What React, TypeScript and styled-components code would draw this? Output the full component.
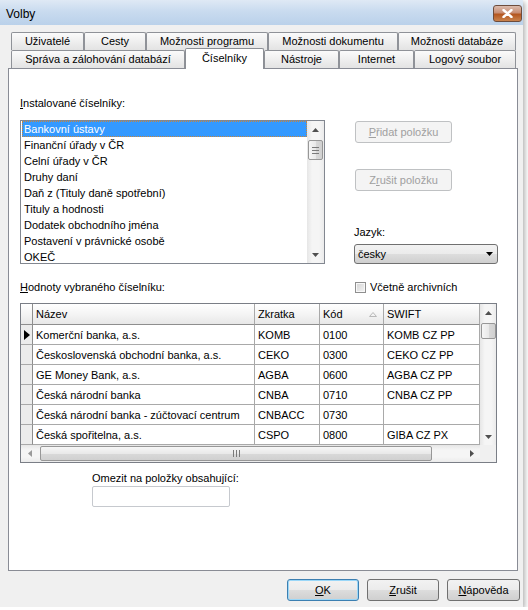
import React from 'react';
import styled, { createGlobalStyle, css } from 'styled-components';

const GlobalStyle = createGlobalStyle`
  html, body {
    margin: 0;
    padding: 0;
    background: #ffffff;
  }
  body {
    font-family: "Liberation Sans", Arial, sans-serif;
    font-size: 11px;
    color: #000;
  }
`;

const Window = styled.div`
  width: 523px;
  height: 607px;
  background: #f0f0f0;
  box-shadow: 2px 2px 5px rgba(0, 0, 0, 0.3);
  display: flex;
  flex-direction: column;
`;

const TitleBar = styled.div`
  height: 25px;
  flex-shrink: 0;
  display: flex;
  align-items: flex-start;
  justify-content: space-between;
  padding: 0 1px 0 6px;
  background: linear-gradient(#dfe9f5, #c9dbef 45%, #bad1ea);
`;

const Title = styled.span`
  font-size: 12px;
  line-height: 28px;
`;

const CloseButton = styled.div`
  width: 29px;
  height: 17px;
  margin-top: 5px;
  box-sizing: border-box;
  border: 1px solid #6d4c3c;
  border-radius: 3px;
  background: linear-gradient(#dcbcae, #c88e74 45%, #b4561f 55%, #c9834e);
  display: flex;
  align-items: center;
  justify-content: center;
`;

const Body = styled.div`
  flex: 1;
  display: flex;
  flex-direction: column;
  padding: 7px 5px 0 8px;
`;

const TabStrip = styled.div`
  padding: 0 2px 0 3px;
  display: flex;
  flex-direction: column;
`;

const TabRow = styled.div`
  display: flex;
  height: 18px;
  align-items: flex-start;
`;

const Tab = styled.div<{ $w: number; $active?: boolean }>`
  width: ${p => p.$w}px;
  height: 18px;
  box-sizing: border-box;
  border: 1px solid #8f9298;
  border-bottom: none;
  border-radius: 2px 2px 0 0;
  background: linear-gradient(#fbfbfb, #f0f0f0 45%, #e3e3e3);
  text-align: center;
  line-height: 17px;
  white-space: nowrap;
  ${p =>
    p.$active &&
    css`
      position: relative;
      z-index: 2;
      height: 21px;
      margin-top: -2px;
      background: #ffffff;
      border-color: #8c8f95;
      line-height: 19px;
    `}
`;

const Panel = styled.div`
  height: 503px;
  box-sizing: border-box;
  border: 1px solid #898c95;
  background: #ffffff;
  padding: 27px 11px 0 11px;
  display: flex;
  flex-direction: column;
`;

const Label = styled.div`
  line-height: 14px;
  height: 14px;
  white-space: nowrap;
`;

const Key = styled.span`
  text-decoration: underline;
`;

const TopSection = styled.div`
  display: flex;
`;

const LeftCol = styled.div`
  width: 305px;
  display: flex;
  flex-direction: column;
  gap: 10px;
`;

const RightCol = styled.div`
  width: 144px;
  margin-left: 29px;
  display: flex;
  flex-direction: column;
`;

const ListBox = styled.div`
  height: 144px;
  box-sizing: border-box;
  border: 1px solid #828790;
  display: flex;
  overflow: hidden;
`;

const ListItems = styled.div`
  flex: 1;
  overflow: hidden;
`;

const ListItem = styled.div<{ $selected?: boolean }>`
  height: 16px;
  box-sizing: border-box;
  line-height: 14px;
  padding: 0 1px;
  margin-left: 1px;
  border: 1px solid transparent;
  white-space: nowrap;
  ${p =>
    p.$selected &&
    css`
      background: #3399ff;
      color: #ffffff;
      border: 1px dotted #c8863c;
    `}
`;

const VScroll = styled.div<{ $w: number }>`
  width: ${p => p.$w}px;
  flex-shrink: 0;
  display: flex;
  flex-direction: column;
  background: linear-gradient(to right, #e6e6e6, #f5f5f5 30%, #f5f5f5 70%, #ebebeb);
`;

const HScroll = styled.div`
  height: 17px;
  flex: 1;
  display: flex;
  align-items: center;
  background: linear-gradient(#e6e6e6, #f5f5f5 30%, #f5f5f5 70%, #ebebeb);
`;

const ArrowBox = styled.div<{ $size: number }>`
  width: ${p => p.$size}px;
  height: ${p => p.$size}px;
  flex-shrink: 0;
  display: flex;
  align-items: center;
  justify-content: center;
`;

const Thumb = styled.div<{ $len: number; $gap: number; $horizontal?: boolean }>`
  box-sizing: border-box;
  border: 1px solid #979797;
  border-radius: 2px;
  display: flex;
  align-items: center;
  justify-content: center;
  ${p =>
    p.$horizontal
      ? css`
          width: ${p.$len}px;
          height: 15px;
          margin-left: ${p.$gap}px;
          background: linear-gradient(#f6f6f6, #e9e9e9 50%, #d9d9d9 51%, #d0d0d0);
        `
      : css`
          height: ${p.$len}px;
          width: 15px;
          margin: ${p.$gap}px 0 0 1px;
          background: linear-gradient(to right, #f6f6f6, #e9e9e9 50%, #d9d9d9 51%, #d0d0d0);
        `}
`;

const Spacer = styled.div`
  flex: 1;
`;

const ActionButton = styled.div<{ $disabled?: boolean; $primary?: boolean; $w: number }>`
  width: ${p => p.$w}px;
  height: 22px;
  box-sizing: border-box;
  border: 1px solid #707070;
  border-radius: 3px;
  background: linear-gradient(#f2f2f2, #ebebeb 50%, #dddddd 51%, #cfcfcf);
  display: flex;
  align-items: center;
  justify-content: center;
  white-space: nowrap;
  ${p =>
    p.$disabled &&
    css`
      border-color: #bfc1c3;
      background: #f4f4f4;
      color: #a0a0a0;
    `}
  ${p =>
    p.$primary &&
    css`
      border-color: #3c7fb1;
      box-shadow: inset 0 0 0 1px #9ad7f8;
    `}
`;

const SideButton = styled(ActionButton)<{ $top: number }>`
  margin: ${p => p.$top}px 0 0 1px;
`;

const Combo = styled.div`
  margin-top: 5px;
  height: 20px;
  box-sizing: border-box;
  border: 1px solid #707070;
  border-radius: 3px;
  background: linear-gradient(#f2f2f2, #ebebeb 50%, #dddddd 51%, #cfcfcf);
  display: flex;
  align-items: center;
  justify-content: space-between;
  padding: 0 4px 0 3px;
`;

const ComboLabel = styled(Label)`
  margin-top: 34px;
`;

const MidRow = styled.div`
  margin-top: 16px;
  display: grid;
  grid-template-columns: 335px 1fr;
  align-items: center;
`;

const CheckGroup = styled.div`
  display: flex;
  align-items: center;
  gap: 4px;
  height: 14px;
`;

const CheckBox = styled.div`
  width: 11px;
  height: 11px;
  box-sizing: border-box;
  border: 1px solid #8f8f8f;
  background: linear-gradient(135deg, #d4d4d4, #f4f4f4);
  box-shadow: inset 0 0 0 1px #f8f8f8;
`;

const DataGrid = styled.div`
  margin-top: 9px;
  width: 477px;
  height: 160px;
  box-sizing: border-box;
  border: 1px solid #7a7e86;
  display: flex;
  flex-direction: column;
`;

const GridMain = styled.div`
  display: flex;
  height: 141px;
`;

const GridBody = styled.div`
  width: 459px;
  display: flex;
  flex-direction: column;
`;

const GridRow = styled.div<{ $header?: boolean }>`
  display: grid;
  grid-template-columns: 12px 222px 65px 64px 96px;
  height: ${p => (p.$header ? 21 : 20)}px;
  ${p =>
    p.$header &&
    css`
      background: linear-gradient(#ffffff, #f4f4f4 50%, #e6e6e6);
    `}
`;

const Cell = styled.div<{ $header?: boolean }>`
  box-sizing: border-box;
  border-right: 1px solid #a9a9a9;
  border-bottom: 1px solid ${p => (p.$header ? '#8e8e8e' : '#a9a9a9')};
  padding: 0 3px;
  display: flex;
  align-items: center;
  justify-content: space-between;
  white-space: nowrap;
  overflow: hidden;
`;

const RowHead = styled.div<{ $header?: boolean }>`
  box-sizing: border-box;
  border-right: 1px solid #8e8e8e;
  border-bottom: 1px solid ${p => (p.$header ? '#8e8e8e' : '#a9a9a9')};
  background: ${p => (p.$header ? 'transparent' : '#ececec')};
  display: flex;
  align-items: center;
  justify-content: center;
`;

const SortMark = styled.svg`
  margin-right: 3px;
`;

const GridFoot = styled.div`
  display: flex;
  height: 17px;
`;

const Corner = styled.div`
  width: 16px;
  background: #f0f0f0;
`;

const FilterBlock = styled.div`
  margin-top: 8px;
  padding-left: 72px;
  display: flex;
  flex-direction: column;
  gap: 1px;
`;

const TextInput = styled.div`
  width: 138px;
  height: 21px;
  box-sizing: border-box;
  border: 1px solid #c6c9ce;
  border-radius: 2px;
  background: #ffffff;
`;

const Footer = styled.div`
  display: flex;
  justify-content: flex-end;
  gap: 8px;
  padding-top: 8px;
  margin-right: -2px;
`;

const Tri = ({ dir, color = '#505050' }: { dir: 'up' | 'down' | 'left' | 'right'; color?: string }) => {
  const pts = {
    up: '0,4 7,4 3.5,0',
    down: '0,0 7,0 3.5,4',
    left: '4,0 4,7 0,3.5',
    right: '0,0 0,7 4,3.5',
  }[dir];
  const vertical = dir === 'up' || dir === 'down';
  return (
    <svg width={vertical ? 7 : 4} height={vertical ? 4 : 7} viewBox={vertical ? '0 0 7 4' : '0 0 4 7'}>
      <polygon points={pts} fill={color} />
    </svg>
  );
};

const RowPointer = () => (
  <svg width="6" height="10" viewBox="0 0 6 10">
    <polygon points="0,0 0,10 6,5" fill="#000000" />
  </svg>
);

const Grip = ({ horizontal }: { horizontal?: boolean }) =>
  horizontal ? (
    <svg width="7" height="7" viewBox="0 0 7 7">
      <path d="M0.5 0v7M3.5 0v7M6.5 0v7" stroke="#7a7a7a" strokeWidth="1" />
    </svg>
  ) : (
    <svg width="7" height="7" viewBox="0 0 7 7">
      <path d="M0 0.5h7M0 3.5h7M0 6.5h7" stroke="#7a7a7a" strokeWidth="1" />
    </svg>
  );

const tabsBack: [string, number][] = [
  ['Uživatelé', 73],
  ['Cesty', 62],
  ['Možnosti programu', 122],
  ['Možnosti dokumentu', 130],
  ['Možnosti databáze', 118],
];

const tabsFront: [string, number][] = [
  ['Správa a zálohování databází', 174],
  ['Číselníky', 79],
  ['Nástroje', 75],
  ['Internet', 75],
  ['Logový soubor', 102],
];

const lists = [
  'Bankovní ústavy',
  'Finanční úřady v ČR',
  'Celní úřady v ČR',
  'Druhy daní',
  'Daň z (Tituly daně spotřební)',
  'Tituly a hodnosti',
  'Dodatek obchodního jména',
  'Postavení v právnické osobě',
  'OKEČ',
];

const rows = [
  ['Komerční banka, a.s.', 'KOMB', '0100', 'KOMB CZ PP'],
  ['Československá obchodní banka, a.s.', 'CEKO', '0300', 'CEKO CZ PP'],
  ['GE Money Bank, a.s.', 'AGBA', '0600', 'AGBA CZ PP'],
  ['Česká národní banka', 'CNBA', '0710', 'CNBA CZ PP'],
  ['Česká národní banka - zúčtovací centrum', 'CNBACC', '0730', ''],
  ['Česká spořitelna, a.s.', 'CSPO', '0800', 'GIBA CZ PX'],
];

const App: React.FC = () => (
  <>
    <GlobalStyle />
    <Window>
      <TitleBar>
        <Title>Volby</Title>
        <CloseButton>
          <svg width="11" height="9" viewBox="0 0 11 9">
            <path d="M1.5 1l8 7M9.5 1l-8 7" stroke="#ffffff" strokeWidth="2.4" strokeLinecap="round" />
          </svg>
        </CloseButton>
      </TitleBar>
      <Body>
        <TabStrip>
          <TabRow>
            {tabsBack.map(([t, w]) => (
              <Tab key={t} $w={w}>{t}</Tab>
            ))}
          </TabRow>
          <TabRow>
            {tabsFront.map(([t, w]) => (
              <Tab key={t} $w={w} $active={t === 'Číselníky'}>{t}</Tab>
            ))}
          </TabRow>
        </TabStrip>
        <Panel>
          <TopSection>
            <LeftCol>
              <Label><Key>I</Key>nstalované číselníky:</Label>
              <ListBox>
                <ListItems>
                  {lists.map((l, i) => (
                    <ListItem key={l} $selected={i === 0}>{l}</ListItem>
                  ))}
                </ListItems>
                <VScroll $w={17}>
                  <ArrowBox $size={17}><Tri dir="up" /></ArrowBox>
                  <Thumb $len={20} $gap={2}><Grip /></Thumb>
                  <Spacer />
                  <ArrowBox $size={17}><Tri dir="down" /></ArrowBox>
                </VScroll>
              </ListBox>
            </LeftCol>
            <RightCol>
              <SideButton $w={97} $top={25} $disabled>
                <span><Key>P</Key>řidat položku</span>
              </SideButton>
              <SideButton $w={97} $top={26} $disabled>
                <span>Z<Key>r</Key>ušit položku</span>
              </SideButton>
              <ComboLabel>Jazyk:</ComboLabel>
              <Combo>
                <span>česky</span>
                <Tri dir="down" color="#000000" />
              </Combo>
            </RightCol>
          </TopSection>
          <MidRow>
            <Label><Key>H</Key>odnoty vybraného číselníku:</Label>
            <CheckGroup>
              <CheckBox />
              <span>Včetně archivních</span>
            </CheckGroup>
          </MidRow>
          <DataGrid>
            <GridMain>
              <GridBody>
                <GridRow $header>
                  <RowHead $header />
                  <Cell $header>Název</Cell>
                  <Cell $header>Zkratka</Cell>
                  <Cell $header>
                    <span>Kód</span>
                    <SortMark width="8" height="5" viewBox="0 0 8 5">
                      <polygon points="0.5,4.5 7.5,4.5 4,0.5" fill="none" stroke="#b8b8b8" />
                    </SortMark>
                  </Cell>
                  <Cell $header>SWIFT</Cell>
                </GridRow>
                {rows.map((r, i) => (
                  <GridRow key={r[0]}>
                    <RowHead>{i === 0 && <RowPointer />}</RowHead>
                    {r.map((c, j) => (
                      <Cell key={j}>{c}</Cell>
                    ))}
                  </GridRow>
                ))}
              </GridBody>
              <VScroll $w={16}>
                <ArrowBox $size={17}><Tri dir="up" /></ArrowBox>
                <Thumb $len={16} $gap={2} />
                <Spacer />
                <ArrowBox $size={17}><Tri dir="down" /></ArrowBox>
              </VScroll>
            </GridMain>
            <GridFoot>
              <HScroll>
                <ArrowBox $size={17}><Tri dir="left" color="#9a9a9a" /></ArrowBox>
                <Thumb $len={392} $gap={2} $horizontal><Grip horizontal /></Thumb>
                <Spacer />
                <ArrowBox $size={17}><Tri dir="right" /></ArrowBox>
              </HScroll>
              <Corner />
            </GridFoot>
          </DataGrid>
          <FilterBlock>
            <Label>Omezit na položky obsahující:</Label>
            <TextInput />
          </FilterBlock>
        </Panel>
        <Footer>
          <ActionButton $w={72} $primary><span><Key>O</Key>K</span></ActionButton>
          <ActionButton $w={72}><span><Key>Z</Key>rušit</span></ActionButton>
          <ActionButton $w={73}><span><Key>N</Key>ápověda</span></ActionButton>
        </Footer>
      </Body>
    </Window>
  </>
);

export default App;
